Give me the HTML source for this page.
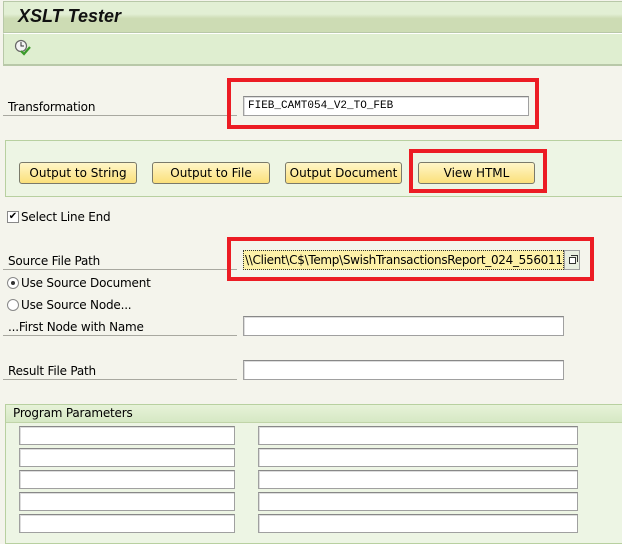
<!DOCTYPE html>
<html><head><meta charset="utf-8"><style>
*{margin:0;padding:0;box-sizing:border-box}
body{width:622px;height:539px;background:#f4f4ec;position:relative;overflow:hidden;font-family:"DejaVu Sans","Liberation Sans",sans-serif;font-size:12px;color:#000}
.a{position:absolute}
.title{left:3px;top:1px;width:619px;height:32px;border:1px solid #b8c8a8;border-right:none;background:linear-gradient(#e2efd4 0,#e2efd4 40%,#cddcb4 55%,#cddcb4 100%)}
.title span{position:absolute;left:14px;top:4px;font-family:"Liberation Sans",sans-serif;font-weight:bold;font-style:italic;font-size:18px;color:#111}
.tb{left:3px;top:33px;width:619px;height:33px;background:#dfeed0;border-left:1px solid #b8c8a8;border-bottom:2px solid #b8c8a8;border-top:1px solid #fff}
.lbl{font-size:12px;letter-spacing:-0.2px}
.line{height:1px;background:#a8a8a0}
.inp{background:#fff;border:1px solid #a0a0a0;border-top-color:#888;box-shadow:inset 1px 1px 0 #ddd}
.red{border:4px solid #ec1c24}
.btn{top:162px;height:22px;border:1px solid #7a7a6a;border-radius:3px;background:linear-gradient(#fff6c8,#fbe07a);text-align:center;line-height:21px;font-size:12px}
.panel{background:#edf5e4;border:1px solid #b8d0a0}
</style></head><body>
<div class="a title"><span>XSLT Tester</span></div>
<div class="a tb"><svg class="a" style="left:10px;top:5px" width="18" height="18" viewBox="0 0 18 18"><circle cx="7" cy="7" r="5.5" fill="#f4f4f4" stroke="#666" stroke-width="1.2"/><path d="M7 3v4h3" stroke="#333" fill="none" stroke-width="1"/><path d="M7 12l3 3 6-7" stroke="#3a9a2a" fill="none" stroke-width="2.2"/></svg></div>

<div class="a lbl" style="left:8px;top:100px">Transformation</div>
<div class="a line" style="left:3px;top:115px;width:234px"></div>
<div class="a inp" style="left:243px;top:96px;width:286px;height:20px;font-family:'Liberation Mono',monospace;font-size:11px;padding:3px 4px">FIEB_CAMT054_V2_TO_FEB</div>
<div class="a red" style="left:227px;top:78px;width:312px;height:51px"></div>

<div class="a panel" style="left:5px;top:140px;width:617px;height:57px;border-right:none"></div>
<div class="a btn" style="left:19px;width:118px">Output to String</div>
<div class="a btn" style="left:152px;width:118px">Output to File</div>
<div class="a btn" style="left:285px;width:117px">Output Document</div>
<div class="a btn" style="left:418px;width:117px">View HTML</div>
<div class="a red" style="left:409px;top:149px;width:138px;height:44px"></div>

<div class="a" style="left:7px;top:211px;width:12px;height:12px;border:1px solid #888;background:#fff;font-size:10px;line-height:10px;text-align:center">✔</div>
<div class="a lbl" style="left:21px;top:210px">Select Line End</div>

<div class="a lbl" style="left:8px;top:254px">Source File Path</div>
<div class="a line" style="left:3px;top:269px;width:234px"></div>
<div class="a" style="left:243px;top:250px;width:321px;height:20px;background:#fdf1a8;border:1px dotted #333;padding:2px 1px;font-size:12px;white-space:nowrap;overflow:hidden;letter-spacing:-0.3px">\\Client\C$\Temp\SwishTransactionsReport_024_5560112</div>
<div class="a" style="left:564px;top:250px;width:16px;height:20px;border:1px solid #a0a0a0;background:#e8eee0"><div class="a" style="left:4px;top:6px;width:7px;height:7px;border:1px solid #333;background:#fff"></div><div class="a" style="left:6px;top:4px;width:7px;height:7px;border:1px solid #333;border-left:none;border-bottom:none"></div></div>
<div class="a red" style="left:227px;top:237px;width:367px;height:44px"></div>

<div class="a" style="left:7px;top:277px;width:12px;height:12px;border:1px solid #888;border-radius:50%;background:#fff"><div class="a" style="left:3px;top:3px;width:4px;height:4px;border-radius:50%;background:#333"></div></div>
<div class="a lbl" style="left:21px;top:276px">Use Source Document</div>
<div class="a" style="left:7px;top:299px;width:12px;height:12px;border:1px solid #888;border-radius:50%;background:#fff"></div>
<div class="a lbl" style="left:21px;top:298px">Use Source Node...</div>

<div class="a lbl" style="left:8px;top:320px">...First Node with Name</div>
<div class="a line" style="left:3px;top:335px;width:234px"></div>
<div class="a inp" style="left:243px;top:316px;width:321px;height:20px"></div>

<div class="a lbl" style="left:8px;top:364px">Result File Path</div>
<div class="a line" style="left:3px;top:379px;width:234px"></div>
<div class="a inp" style="left:243px;top:360px;width:321px;height:20px"></div>

<div class="a panel" style="left:5px;top:404px;width:617px;height:140px;border-right:none"></div>
<div class="a" style="left:6px;top:405px;width:616px;height:18px;background:linear-gradient(#e6f2d8,#d6e8c4);border-bottom:1px solid #c0d4a8"></div>
<div class="a lbl" style="left:13px;top:406px">Program Parameters</div>
<div class="a inp" style="left:19px;top:426px;width:216px;height:19px"></div>
<div class="a inp" style="left:19px;top:448px;width:216px;height:19px"></div>
<div class="a inp" style="left:19px;top:470px;width:216px;height:19px"></div>
<div class="a inp" style="left:19px;top:492px;width:216px;height:19px"></div>
<div class="a inp" style="left:19px;top:514px;width:216px;height:19px"></div>
<div class="a inp" style="left:258px;top:426px;width:320px;height:19px"></div>
<div class="a inp" style="left:258px;top:448px;width:320px;height:19px"></div>
<div class="a inp" style="left:258px;top:470px;width:320px;height:19px"></div>
<div class="a inp" style="left:258px;top:492px;width:320px;height:19px"></div>
<div class="a inp" style="left:258px;top:514px;width:320px;height:19px"></div>
</body></html>
